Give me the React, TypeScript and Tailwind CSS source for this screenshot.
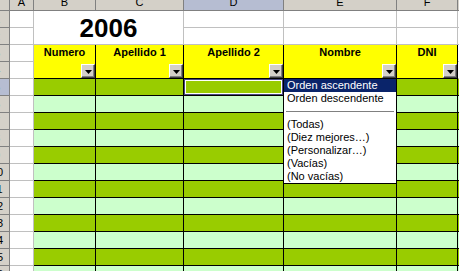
import React from 'react';

const cols = [
  { letter: 'B', title: 'Numero' },
  { letter: 'C', title: 'Apellido 1' },
  { letter: 'D', title: 'Apellido 2' },
  { letter: 'E', title: 'Nombre' },
  { letter: 'F', title: 'DNI' },
];

const letters = ['A', 'B', 'C', 'D', 'E', 'F', 'G'];

const menu = [
  'Orden ascendente',
  'Orden descendente',
  '-',
  '(Todas)',
  '(Diez mejores…)',
  '(Personalizar…)',
  '(Vacías)',
  '(No vacías)',
];

function FilterButton() {
  return (
    <div className="mt-auto flex h-[14px] w-[14px] items-center justify-center self-end border border-t-white border-l-white border-r-[#404040] border-b-[#404040] bg-[#d4d0c8] shadow-[inset_-1px_-1px_0_#808080]">
      <svg width="7" height="4" viewBox="0 0 7 4" className="mt-[1px]">
        <path d="M0 0h7L3.5 4z" fill="#000" />
      </svg>
    </div>
  );
}

function RowHead({ n, active }: { n: number; active?: boolean }) {
  return (
    <div
      className={`overflow-hidden border-r border-b border-[#808080] ${
        active ? 'bg-[#b6bdd2]' : 'bg-[#d4d0c8]'
      }`}
    >
      <div className="ml-[-16px] w-[26px] text-center text-[11px] leading-[16px] text-black">{n}</div>
    </div>
  );
}

function White() {
  return <div className="border-r border-b border-[#c0c0c0] bg-white" />;
}

export default function App() {
  const dataRows = [5, 6, 7, 8, 9, 10, 11, 12, 13, 14, 15, 16];

  return (
    <div className="relative h-[271px] w-[459px] overflow-hidden bg-white font-['Liberation_Sans',Arial,sans-serif] text-black">
      <div className="grid grid-cols-[10px_24px_62px_88px_100px_113px_61px_20px] grid-rows-[11px_repeat(16,17px)]">
        {/* column letters */}
        <div className="border-r border-b border-[#808080] bg-[#d4d0c8]" />
        {letters.map((l) => (
          <div
            key={l}
            className={`flex items-end justify-center overflow-hidden border-r border-b border-[#808080] ${
              l === 'D' ? 'bg-[#b6bdd2]' : 'bg-[#d4d0c8]'
            }`}
          >
            <span className="mb-[2px] text-[11px] leading-none">{l}</span>
          </div>
        ))}

        {/* row 1 */}
        <RowHead n={1} />
        <White />
        <div className="col-span-2 row-span-2 flex items-center justify-center border-r border-b border-[#c0c0c0] bg-white text-[26px] font-bold leading-none">
          2006
        </div>
        <White />
        <White />
        <White />
        <White />

        {/* row 2 */}
        <RowHead n={2} />
        <White />
        <White />
        <White />
        <White />
        <White />

        {/* rows 3-4: header */}
        <RowHead n={3} />
        <White />
        {cols.map((c) => (
          <div
            key={c.letter}
            className="row-span-2 flex flex-col border-r border-b border-black bg-[#ffff00]"
          >
            <div className="pt-[1px] text-center text-[11px] font-bold leading-[13px]">{c.title}</div>
            <FilterButton />
          </div>
        ))}
        <White />
        <RowHead n={4} />
        <White />
        <White />

        {/* data rows */}
        {dataRows.map((r) => {
          const bg = r % 2 === 1 ? 'bg-[#99cc00]' : 'bg-[#ccffcc]';
          return (
            <React.Fragment key={r}>
              <RowHead n={r} active={r === 5} />
              <White />
              {cols.map((c) => (
                <div
                  key={c.letter}
                  className={`border-r border-b border-black ${bg} ${
                    r === 5 && c.letter === 'D'
                      ? 'shadow-[inset_0_0_0_1px_#48487e,inset_0_0_0_2px_#ffffff]'
                      : ''
                  }`}
                />
              ))}
              <div className={`border-b border-black ${bg}`} />
            </React.Fragment>
          );
        })}
      </div>

      {/* autofilter dropdown */}
      <div className="absolute top-[78px] left-[283px] w-[114px] border border-black bg-white">
        {menu.map((m, i) =>
          m === '-' ? (
            <div key={i} className="flex h-[13px] items-center px-[2px]">
              <div className="h-px w-full bg-[#808080]" />
            </div>
          ) : (
            <div
              key={i}
              className={`h-[13px] pl-[3px] text-[11px] leading-[13px] whitespace-nowrap ${
                i === 0 ? 'bg-[#0a246a] text-white' : 'text-black'
              }`}
            >
              {m}
            </div>
          )
        )}
      </div>
    </div>
  );
}
